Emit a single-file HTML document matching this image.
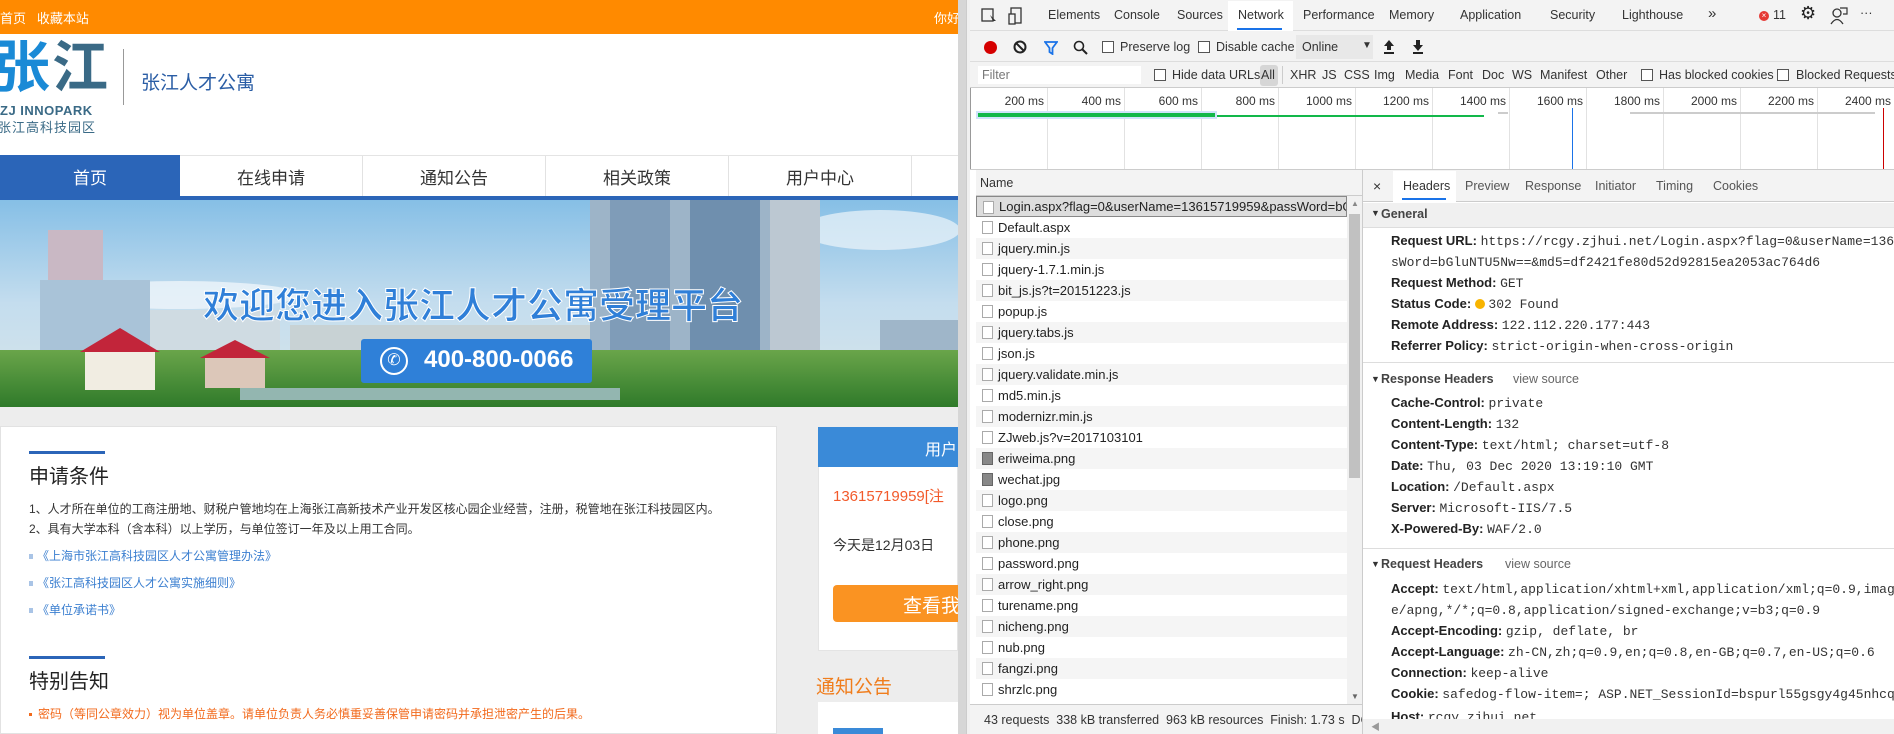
<!DOCTYPE html>
<html><head><meta charset="utf-8">
<style>
*{margin:0;padding:0;box-sizing:border-box}
body{width:1894px;height:734px;overflow:hidden;position:relative;background:#fff;font-family:"Liberation Sans","Noto Sans CJK SC",sans-serif}
.a{position:absolute;white-space:nowrap}
.cn{font-family:"Liberation Sans","Noto Sans CJK SC",sans-serif}
.dt{font-family:"Liberation Sans","Noto Sans CJK SC",sans-serif;font-size:12.5px;color:#333}
.cb{position:absolute;width:12px;height:12px;border:1px solid #555;background:#fff}
.row{position:absolute;left:976px;width:371px;height:21px;font-size:13px;color:#222;padding-left:22px;line-height:21px;white-space:nowrap;overflow:hidden}
.row i{position:absolute;left:6px;top:4px;width:11px;height:13px;border:1px solid #aaa;background:#fff}
.lbl{font-weight:bold;color:#222}
.kv{position:absolute;left:1391px;font-size:13px;color:#222;white-space:nowrap}
.kv span{font-family:"Liberation Mono",monospace;font-size:13px;color:#333}
</style></head><body>

<div class="a" style="left:0;top:0;width:958px;height:34px;background:#ff8a00"></div>
<div class="a cn" style="left:0;top:8px;font-size:13px;color:#fff">首页&nbsp;&nbsp;&nbsp;收藏本站</div>
<div class="a cn" style="left:934px;top:8px;font-size:13px;color:#fff">你好</div>

<div class="a cn" style="left:-6px;top:38px;font-size:56px;line-height:60px;font-weight:bold;letter-spacing:2px;color:#1a8ad6">张<span style="color:#3a6a86">江</span></div>
<div class="a" style="left:0;top:103px;font-size:13px;color:#3a6a86;font-weight:bold;letter-spacing:0.5px">ZJ INNOPARK</div>
<div class="a cn" style="left:-2px;top:117px;font-size:13px;color:#3a6a86;letter-spacing:1px">张江高科技园区</div>
<div class="a" style="left:123px;top:49px;width:1px;height:56px;background:#999"></div>
<div class="a cn" style="left:141px;top:68px;font-size:19px;color:#2a5da5">张江人才公寓</div>

<div class="a" style="left:0;top:155px;width:958px;height:41px;background:#fff;border-top:1px solid #e4e4e4"></div>
<div class="a" style="left:0;top:155px;width:180px;height:41px;background:#2b65b8"></div>
<div class="a" style="left:0;top:196px;width:958px;height:4px;background:#2b65b8"></div>
<div class="a" style="left:362px;top:156px;width:1px;height:40px;background:#e2e2e2"></div>
<div class="a" style="left:545px;top:156px;width:1px;height:40px;background:#e2e2e2"></div>
<div class="a" style="left:728px;top:156px;width:1px;height:40px;background:#e2e2e2"></div>
<div class="a" style="left:911px;top:156px;width:1px;height:40px;background:#e2e2e2"></div>
<div class="a cn" style="left:0;top:164px;width:180px;text-align:center;font-size:17px;color:#fff">首页</div>
<div class="a cn" style="left:180px;top:164px;width:182px;text-align:center;font-size:17px;color:#333">在线申请</div>
<div class="a cn" style="left:363px;top:164px;width:182px;text-align:center;font-size:17px;color:#333">通知公告</div>
<div class="a cn" style="left:546px;top:164px;width:182px;text-align:center;font-size:17px;color:#333">相关政策</div>
<div class="a cn" style="left:729px;top:164px;width:182px;text-align:center;font-size:17px;color:#333">用户中心</div>

<svg class="a" style="left:0;top:200px" width="958" height="207">
<defs>
<linearGradient id="sky" x1="0" y1="0" x2="0" y2="1"><stop offset="0" stop-color="#86bfe6"/><stop offset="0.5" stop-color="#c4ddee"/><stop offset="1" stop-color="#d9e6ea"/></linearGradient>
<linearGradient id="gr" x1="0" y1="0" x2="0" y2="1"><stop offset="0" stop-color="#6aa54a"/><stop offset="1" stop-color="#2f7a2a"/></linearGradient>
</defs>
<rect width="958" height="207" fill="url(#sky)"/>
<ellipse cx="180" cy="95" rx="120" ry="14" fill="#eef5fa" opacity="0.8"/>
<ellipse cx="880" cy="30" rx="80" ry="20" fill="#eef5fa" opacity="0.7"/>
<rect x="590" y="0" width="230" height="150" fill="#9db4c8"/>
<rect x="610" y="0" width="60" height="150" fill="#7f9cb8"/>
<rect x="690" y="0" width="70" height="150" fill="#6f8fae"/>
<rect x="770" y="0" width="50" height="150" fill="#bcc8d2"/>
<rect x="48" y="30" width="55" height="110" fill="#c9b8c4"/>
<rect x="40" y="80" width="110" height="90" fill="#a9c3d8"/>
<rect x="150" y="110" width="130" height="60" fill="#cfdbe2"/>
<rect x="880" y="120" width="78" height="60" fill="#9fb6c9"/>
<rect x="290" y="125" width="300" height="40" fill="#c8d2d4"/>
<rect x="0" y="150" width="958" height="57" fill="url(#gr)"/>
<rect x="85" y="150" width="70" height="40" fill="#f1ede2"/>
<polygon points="80,152 120,128 160,152" fill="#c2253a"/>
<polygon points="200,158 235,140 270,158" fill="#c2253a"/>
<rect x="205" y="158" width="60" height="30" fill="#dcc7b9"/>
<rect x="240" y="188" width="380" height="12" fill="#93b6b0"/>
</svg>
<div class="a cn" style="left:203px;top:277px;font-size:36px;font-weight:bold;color:#2f7fd8;-webkit-text-stroke:1px #fff">欢迎您进入张江人才公寓受理平台</div>
<div class="a" style="left:361px;top:339px;width:231px;height:44px;background:#2f80d8;border-radius:3px"></div>
<div class="a" style="left:380px;top:347px;width:28px;height:28px;border:2px solid #fff;border-radius:50%;color:#fff;font-size:16px;text-align:center;line-height:24px">✆</div>
<div class="a" style="left:424px;top:346px;font-size:24px;color:#fff;font-weight:bold">400-800-0066</div>

<div class="a" style="left:0;top:407px;width:958px;height:327px;background:#ededed"></div>
<div class="a" style="left:0;top:426px;width:777px;height:308px;background:#fff;border:1px solid #e2e2e2"></div>
<div class="a" style="left:29px;top:451px;width:76px;height:3px;background:#2b65b8"></div>
<div class="a cn" style="left:29px;top:460px;font-size:20px;color:#222">申请条件</div>
<div class="a cn" style="left:29px;top:500px;font-size:12px;color:#333">1、人才所在单位的工商注册地、财税户管地均在上海张江高新技术产业开发区核心园企业经营，注册，税管地在张江科技园区内。</div>
<div class="a cn" style="left:29px;top:520px;font-size:12px;color:#333">2、具有大学本科（含本科）以上学历，与单位签订一年及以上用工合同。</div>
<div class="a" style="left:29px;top:554px;width:4px;height:5px;background:#a9c4e6"></div>
<div class="a cn" style="left:37px;top:547px;font-size:12px;color:#3b7fd0">《上海市张江高科技园区人才公寓管理办法》</div>
<div class="a" style="left:29px;top:581px;width:4px;height:5px;background:#a9c4e6"></div>
<div class="a cn" style="left:37px;top:574px;font-size:12px;color:#3b7fd0">《张江高科技园区人才公寓实施细则》</div>
<div class="a" style="left:29px;top:608px;width:4px;height:5px;background:#a9c4e6"></div>
<div class="a cn" style="left:37px;top:601px;font-size:12px;color:#3b7fd0">《单位承诺书》</div>
<div class="a" style="left:29px;top:656px;width:76px;height:3px;background:#2b65b8"></div>
<div class="a cn" style="left:29px;top:665px;font-size:20px;color:#222">特别告知</div>
<div class="a" style="left:29px;top:713px;width:3px;height:3px;background:#f26a1c"></div>
<div class="a cn" style="left:38px;top:705px;font-size:12px;color:#f26a1c">密码（等同公章效力）视为单位盖章。请单位负责人务必慎重妥善保管申请密码并承担泄密产生的后果。</div>

<div class="a" style="left:818px;top:427px;width:140px;height:224px;background:#fff;border:1px solid #e4e4e4"></div>
<div class="a" style="left:818px;top:427px;width:140px;height:40px;background:#3a8ad8"></div>
<div class="a cn" style="left:925px;top:436px;font-size:16px;color:#fff">用户</div>
<div class="a cn" style="left:833px;top:485px;font-size:15px;color:#f25a2b">13615719959[注</div>
<div class="a cn" style="left:833px;top:535px;font-size:14px;color:#333">今天是12月03日</div>
<div class="a" style="left:833px;top:585px;width:125px;height:37px;background:#fa9322;border-radius:4px 0 0 4px"></div>
<div class="a cn" style="left:903px;top:591px;font-size:19px;color:#fff">查看我</div>
<div class="a cn" style="left:816px;top:672px;font-size:19px;color:#f07d1c">通知公告</div>
<div class="a" style="left:818px;top:702px;width:140px;height:32px;background:#fff"></div>
<div class="a" style="left:833px;top:728px;width:50px;height:6px;background:#3a8ad8"></div>

<div class="a" style="left:958px;top:0;width:8px;height:734px;background:#d6d6d6"></div>
<div class="a" style="left:966px;top:0;width:4px;height:734px;background:#f0f0f0;border-left:1px solid #ccc"></div>

<div class="a" style="left:970px;top:0;width:924px;height:31px;background:#f3f3f3;border-bottom:1px solid #ddd"></div>
<div class="a" style="left:1228px;top:1px;width:65px;height:30px;background:#fff"></div>
<div class="a" style="left:1237px;top:28px;width:45px;height:2px;background:#1a73e8"></div>
<svg class="a" style="left:981px;top:7px" width="50" height="18"><rect x="1" y="2" width="11" height="12" fill="none" stroke="#333" stroke-width="1.3"/><path d="M9 8 L15 14 L12 14 Z" fill="#333"/><rect x="30" y="1" width="10" height="15" fill="none" stroke="#333" stroke-width="1.3"/><rect x="28" y="7" width="6" height="10" fill="#f3f3f3" stroke="#333" stroke-width="1.3"/></svg>
<div class="a dt" style="left:1048px;top:8px">Elements</div>
<div class="a dt" style="left:1114px;top:8px">Console</div>
<div class="a dt" style="left:1177px;top:8px">Sources</div>
<div class="a dt" style="left:1238px;top:8px">Network</div>
<div class="a dt" style="left:1303px;top:8px">Performance</div>
<div class="a dt" style="left:1389px;top:8px">Memory</div>
<div class="a dt" style="left:1460px;top:8px">Application</div>
<div class="a dt" style="left:1550px;top:8px">Security</div>
<div class="a dt" style="left:1622px;top:8px">Lighthouse</div>
<div class="a dt" style="left:1708px;top:5px;font-size:15px">»</div>
<div class="a" style="left:1759px;top:11px;width:10px;height:10px;border-radius:50%;background:#e53935;color:#fff;font-size:8px;line-height:10px;text-align:center">×</div>
<div class="a dt" style="left:1773px;top:8px">11</div>
<div class="a" style="left:1800px;top:3px;font-size:18px;color:#222">⚙</div>
<svg class="a" style="left:1830px;top:7px" width="18" height="18"><circle cx="7" cy="6" r="4" fill="none" stroke="#333" stroke-width="1.3"/><path d="M1 17 Q7 8 13 17" fill="none" stroke="#333" stroke-width="1.3"/><path d="M10 1 H17 V7 H13" fill="none" stroke="#333" stroke-width="1.2"/></svg>
<div class="a dt" style="left:1860px;top:6px">···</div>

<div class="a" style="left:970px;top:31px;width:924px;height:31px;background:#f3f3f3;border-bottom:1px solid #ddd"></div>
<div class="a" style="left:984px;top:41px;width:13px;height:13px;border-radius:50%;background:#d50000"></div>
<svg class="a" style="left:1013px;top:40px" width="14" height="14"><circle cx="7" cy="7" r="5.5" fill="none" stroke="#222" stroke-width="2"/><path d="M3 3 L11 11" stroke="#222" stroke-width="2"/></svg>
<svg class="a" style="left:1044px;top:41px" width="14" height="14"><path d="M1 1 H13 L8.5 7 V13 L5.5 11 V7 Z" fill="none" stroke="#1a73e8" stroke-width="1.8"/></svg>
<svg class="a" style="left:1073px;top:40px" width="16" height="16"><circle cx="6" cy="6" r="4.5" fill="none" stroke="#222" stroke-width="1.6"/><path d="M9.5 9.5 L14 14" stroke="#222" stroke-width="2"/></svg>
<div class="cb" style="left:1102px;top:41px"></div>
<div class="a dt" style="left:1120px;top:40px">Preserve log</div>
<div class="cb" style="left:1198px;top:41px"></div>
<div class="a dt" style="left:1216px;top:40px">Disable cache</div>
<div class="a" style="left:1296px;top:35px;width:77px;height:24px;background:#e8e8e8"></div>
<div class="a dt" style="left:1302px;top:40px">Online</div>
<div class="a dt" style="left:1362px;top:40px;font-size:10px">▼</div>
<svg class="a" style="left:1382px;top:39px" width="14" height="16"><path d="M7 1 L12 7 H9 V11 H5 V7 H2 Z" fill="#222"/><rect x="2" y="13" width="10" height="2" fill="#222"/></svg>
<svg class="a" style="left:1411px;top:39px" width="14" height="16"><path d="M7 12 L12 6 H9 V1 H5 V6 H2 Z" fill="#222"/><rect x="2" y="13" width="10" height="2" fill="#222"/></svg>

<div class="a" style="left:970px;top:62px;width:924px;height:26px;background:#f3f3f3;border-bottom:1px solid #ccc"></div>
<div class="a" style="left:978px;top:66px;width:163px;height:18px;background:#fff"></div>
<div class="a dt" style="left:982px;top:68px;color:#777">Filter</div>
<div class="cb" style="left:1154px;top:69px"></div>
<div class="a dt" style="left:1172px;top:68px">Hide data URLs</div>
<div class="a" style="left:1260px;top:65px;width:18px;height:21px;background:#d6d6d6;border-radius:3px"></div>
<div class="a dt" style="left:1261px;top:68px">All</div>
<div class="a" style="left:1282px;top:66px;width:1px;height:18px;background:#ccc"></div>
<div class="a dt" style="left:1290px;top:68px">XHR</div>
<div class="a dt" style="left:1322px;top:68px">JS</div>
<div class="a dt" style="left:1344px;top:68px">CSS</div>
<div class="a dt" style="left:1374px;top:68px">Img</div>
<div class="a dt" style="left:1405px;top:68px">Media</div>
<div class="a dt" style="left:1448px;top:68px">Font</div>
<div class="a dt" style="left:1482px;top:68px">Doc</div>
<div class="a dt" style="left:1512px;top:68px">WS</div>
<div class="a dt" style="left:1540px;top:68px">Manifest</div>
<div class="a dt" style="left:1596px;top:68px">Other</div>
<div class="cb" style="left:1641px;top:69px"></div>
<div class="a dt" style="left:1659px;top:68px">Has blocked cookies</div>
<div class="cb" style="left:1777px;top:69px"></div>
<div class="a dt" style="left:1796px;top:68px">Blocked Requests</div>

<svg class="a" style="left:970px;top:88px" width="924" height="81">
<rect width="924" height="81" fill="#fff"/>
<g stroke="#e2e2e2" stroke-width="1">
<line x1="0.5" y1="0" x2="0.5" y2="81" stroke="#999"/>
<line x1="77.5" y1="0" x2="77.5" y2="81"/><line x1="154.5" y1="0" x2="154.5" y2="81"/><line x1="231.5" y1="0" x2="231.5" y2="81"/><line x1="308.5" y1="0" x2="308.5" y2="81"/><line x1="385.5" y1="0" x2="385.5" y2="81"/><line x1="462.5" y1="0" x2="462.5" y2="81"/><line x1="539.5" y1="0" x2="539.5" y2="81"/><line x1="616.5" y1="0" x2="616.5" y2="81"/><line x1="693.5" y1="0" x2="693.5" y2="81"/><line x1="770.5" y1="0" x2="770.5" y2="81"/><line x1="847.5" y1="0" x2="847.5" y2="81"/>
</g>
<g font-family="Liberation Sans" font-size="12" fill="#333" text-anchor="end">
<text x="74" y="17">200 ms</text><text x="151" y="17">400 ms</text><text x="228" y="17">600 ms</text><text x="305" y="17">800 ms</text><text x="382" y="17">1000 ms</text><text x="459" y="17">1200 ms</text><text x="536" y="17">1400 ms</text><text x="613" y="17">1600 ms</text><text x="690" y="17">1800 ms</text><text x="767" y="17">2000 ms</text><text x="844" y="17">2200 ms</text><text x="921" y="17">2400 ms</text>
</g>
<rect x="6" y="23" width="241" height="8" fill="#cfe3fb"/>
<rect x="8" y="25" width="237" height="4" fill="#12b84a"/>
<rect x="247" y="27" width="267" height="2" fill="#12b84a"/>
<rect x="528" y="24" width="10" height="2" fill="#ccc"/>
<rect x="660" y="24" width="245" height="2" fill="#ccc"/>
<rect x="602" y="20" width="1" height="61" fill="#1a73e8"/>
<rect x="913" y="20" width="1" height="61" fill="#c00"/>
</svg>

<div class="a" style="left:970px;top:169px;width:924px;height:1px;background:#ccc"></div>
<div class="a" style="left:976px;top:170px;width:386px;height:26px;background:#f3f3f3;border-bottom:1px solid #ccc"></div>
<div class="a dt" style="left:980px;top:176px">Name</div>
<div class="a" style="left:1362px;top:170px;width:1px;height:564px;background:#ccc"></div>
<div class="row" style="top:196px;background:#ddd;border:1px solid #888;line-height:19px"><i></i>Login.aspx?flag=0&amp;userName=13615719959&amp;passWord=bGluNT</div>
<div class="row" style="top:217px"><i></i>Default.aspx</div>
<div class="row" style="top:238px;background:#f5f5f5"><i></i>jquery.min.js</div>
<div class="row" style="top:259px"><i></i>jquery-1.7.1.min.js</div>
<div class="row" style="top:280px;background:#f5f5f5"><i></i>bit_js.js?t=20151223.js</div>
<div class="row" style="top:301px"><i></i>popup.js</div>
<div class="row" style="top:322px;background:#f5f5f5"><i></i>jquery.tabs.js</div>
<div class="row" style="top:343px"><i></i>json.js</div>
<div class="row" style="top:364px;background:#f5f5f5"><i></i>jquery.validate.min.js</div>
<div class="row" style="top:385px"><i></i>md5.min.js</div>
<div class="row" style="top:406px;background:#f5f5f5"><i></i>modernizr.min.js</div>
<div class="row" style="top:427px"><i></i>ZJweb.js?v=2017103101</div>
<div class="row" style="top:448px;background:#f5f5f5"><i style="background:#888;border-color:#666"></i>eriweima.png</div>
<div class="row" style="top:469px"><i style="background:#888;border-color:#666"></i>wechat.jpg</div>
<div class="row" style="top:490px;background:#f5f5f5"><i></i>logo.png</div>
<div class="row" style="top:511px"><i></i>close.png</div>
<div class="row" style="top:532px;background:#f5f5f5"><i></i>phone.png</div>
<div class="row" style="top:553px"><i></i>password.png</div>
<div class="row" style="top:574px;background:#f5f5f5"><i></i>arrow_right.png</div>
<div class="row" style="top:595px"><i></i>turename.png</div>
<div class="row" style="top:616px;background:#f5f5f5"><i></i>nicheng.png</div>
<div class="row" style="top:637px"><i></i>nub.png</div>
<div class="row" style="top:658px;background:#f5f5f5"><i></i>fangzi.png</div>
<div class="row" style="top:679px"><i></i>shrzlc.png</div>
<div class="a" style="left:1347px;top:196px;width:15px;height:508px;background:#f1f1f1"></div>
<div class="a" style="left:1349px;top:214px;width:11px;height:264px;background:#c1c1c1"></div>
<div class="a" style="left:1351px;top:199px;font-size:8px;color:#888">▲</div>
<div class="a" style="left:1351px;top:692px;font-size:8px;color:#666">▼</div>
<div class="a" style="left:970px;top:704px;width:392px;height:30px;background:#f3f3f3;border-top:1px solid #ccc;overflow:hidden"><div class="a dt" style="left:14px;top:8px">43 requests&nbsp;&nbsp;338 kB transferred&nbsp;&nbsp;963 kB resources&nbsp;&nbsp;Finish: 1.73 s&nbsp;&nbsp;DOMC</div></div>

<div class="a" style="left:1363px;top:170px;width:531px;height:32px;background:#f3f3f3;border-bottom:1px solid #ccc"></div>
<div class="a" style="left:1393px;top:171px;width:63px;height:31px;background:#fff"></div>
<div class="a" style="left:1402px;top:198px;width:44px;height:2px;background:#1a73e8"></div>
<div class="a dt" style="left:1373px;top:178px;font-size:14px">×</div>
<div class="a dt" style="left:1403px;top:179px">Headers</div>
<div class="a dt" style="left:1465px;top:179px;color:#555">Preview</div>
<div class="a dt" style="left:1525px;top:179px;color:#555">Response</div>
<div class="a dt" style="left:1595px;top:179px;color:#555">Initiator</div>
<div class="a dt" style="left:1656px;top:179px;color:#555">Timing</div>
<div class="a dt" style="left:1713px;top:179px;color:#555">Cookies</div>
<div class="a" style="left:1363px;top:203px;width:531px;height:25px;background:#f0f0f0;border-bottom:1px solid #ddd"></div>
<div class="a dt" style="left:1371px;top:208px;font-size:9px">▼</div>
<div class="a dt" style="left:1381px;top:207px;font-weight:bold;color:#444">General</div>
<div class="kv" style="top:233px"><b class="lbl">Request URL:</b> <span>https://rcgy.zjhui.net/Login.aspx?flag=0&amp;userName=13615719959&amp;pa</span></div>
<div class="kv" style="top:254px"><span>sWord=bGluNTU5Nw==&amp;md5=df2421fe80d52d92815ea2053ac764d6</span></div>
<div class="kv" style="top:275px"><b class="lbl">Request Method:</b> <span>GET</span></div>
<div class="kv" style="top:296px"><b class="lbl">Status Code:</b> <span style="display:inline-block;width:10px;height:10px;border-radius:50%;background:#f8b400;vertical-align:-1px"></span> <span>302 Found</span></div>
<div class="kv" style="top:317px"><b class="lbl">Remote Address:</b> <span>122.112.220.177:443</span></div>
<div class="kv" style="top:338px"><b class="lbl">Referrer Policy:</b> <span>strict-origin-when-cross-origin</span></div>
<div class="a" style="left:1363px;top:362px;width:531px;height:1px;background:#ddd"></div>
<div class="a dt" style="left:1371px;top:374px;font-size:9px">▼</div>
<div class="a dt" style="left:1381px;top:372px;font-weight:bold;color:#444">Response Headers</div>
<div class="a dt" style="left:1513px;top:372px;color:#666">view source</div>
<div class="kv" style="top:395px"><b class="lbl">Cache-Control:</b> <span>private</span></div>
<div class="kv" style="top:416px"><b class="lbl">Content-Length:</b> <span>132</span></div>
<div class="kv" style="top:437px"><b class="lbl">Content-Type:</b> <span>text/html; charset=utf-8</span></div>
<div class="kv" style="top:458px"><b class="lbl">Date:</b> <span>Thu, 03 Dec 2020 13:19:10 GMT</span></div>
<div class="kv" style="top:479px"><b class="lbl">Location:</b> <span>/Default.aspx</span></div>
<div class="kv" style="top:500px"><b class="lbl">Server:</b> <span>Microsoft-IIS/7.5</span></div>
<div class="kv" style="top:521px"><b class="lbl">X-Powered-By:</b> <span>WAF/2.0</span></div>
<div class="a" style="left:1363px;top:548px;width:531px;height:1px;background:#ddd"></div>
<div class="a dt" style="left:1371px;top:559px;font-size:9px">▼</div>
<div class="a dt" style="left:1381px;top:557px;font-weight:bold;color:#444">Request Headers</div>
<div class="a dt" style="left:1505px;top:557px;color:#666">view source</div>
<div class="kv" style="top:581px"><b class="lbl">Accept:</b> <span>text/html,application/xhtml+xml,application/xml;q=0.9,image/webp,imag</span></div>
<div class="kv" style="top:602px"><span>e/apng,*/*;q=0.8,application/signed-exchange;v=b3;q=0.9</span></div>
<div class="kv" style="top:623px"><b class="lbl">Accept-Encoding:</b> <span>gzip, deflate, br</span></div>
<div class="kv" style="top:644px"><b class="lbl">Accept-Language:</b> <span>zh-CN,zh;q=0.9,en;q=0.8,en-GB;q=0.7,en-US;q=0.6</span></div>
<div class="kv" style="top:665px"><b class="lbl">Connection:</b> <span>keep-alive</span></div>
<div class="kv" style="top:686px"><b class="lbl">Cookie:</b> <span>safedog-flow-item=; ASP.NET_SessionId=bspurl55gsgy4g45nhcqpou2</span></div>
<div class="kv" style="top:709px"><b class="lbl">Host:</b> <span>rcgy.zjhui.net</span></div>
<div class="a" style="left:1363px;top:719px;width:531px;height:15px;background:#f1f1f1"></div>
<div class="a" style="left:1371px;top:720px;font-size:9px;color:#999">◀</div>
</body></html>
